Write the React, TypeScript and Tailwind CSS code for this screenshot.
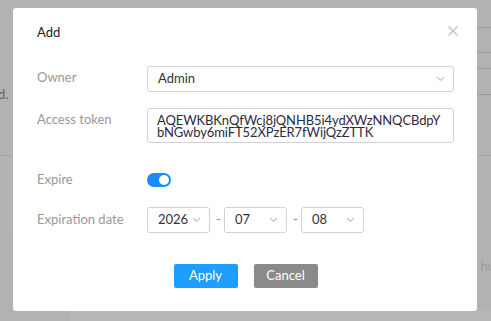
import { useState } from 'react'

function Chevron() {
  return (
    <svg width="9" height="6" viewBox="0 0 9 6" fill="none" className="shrink-0">
      <path d="M1 1l3.5 3.5L8 1" stroke="#c2c2c2" strokeWidth="1.1" />
    </svg>
  )
}

function DateSelect({ value }: { value: string }) {
  return (
    <div className="w-[63px] h-[26px] border border-[#d2d2d2] rounded-[3px] flex items-center justify-between pl-[10px] pr-[8px] text-[13px] text-[#333]">
      <span>{value}</span>
      <Chevron />
    </div>
  )
}

export default function App() {
  const [expire, setExpire] = useState(true)

  return (
    <div
      className="relative w-[491px] h-[321px] overflow-hidden bg-[#b2b2b2] text-[#333]"
      style={{ fontFamily: 'Lato, "Noto Sans", sans-serif' }}
    >
      {/* page behind the overlay */}
      <div className="flex flex-col h-full">
        <div className="h-[28px] border-b border-[#9a9a9a] ml-[477px]" />
        <div className="h-[25px] border-b border-[#9a9a9a] ml-[477px]" />
        <div className="h-[16px] border-b border-[#9a9a9a] ml-[477px]" />
        <div className="h-[26px] border-b border-[#9a9a9a] ml-[477px]" />
        <div className="h-[70px] flex items-start text-[13px] text-[#666] -mt-[10px]">
          <span className="ml-[-2px]">d.</span>
        </div>
        <div className="h-[78px] border-t border-[#a4a4a4] bg-[#b4b4b4]" />
        <div className="flex-1 flex items-start justify-end pt-[24px] text-[13px] text-[#9c9c9c]">
          <span className="mr-[-4px]">hu</span>
        </div>
        <div className="h-[10px] ml-[70px] bg-[#b8b8b8]" />
      </div>

      {/* modal */}
      <div className="absolute left-[13px] top-[8px] w-[464px] h-[303px] bg-white rounded-[3px] flex flex-col">
        <div className="flex items-center justify-between pl-[24px] pr-[19px] h-[46px]">
          <span className="text-[13px] text-[#222] mt-[3px]">Add</span>
          <svg width="10" height="10" viewBox="0 0 10 10" className="mb-[1px]">
            <path d="M0.5 0.5l9 9M9.5 0.5l-9 9" stroke="#bdbdbd" strokeWidth="1.1" />
          </svg>
        </div>

        <div className="flex flex-col pl-[24px] pr-[23px] pt-[12px] text-[13px]">
          <div className="flex items-start">
            <label className="w-[110px] text-[#999] pt-[2px]">Owner</label>
            <div className="flex-1 h-[26px] border border-[#d2d2d2] rounded-[3px] flex items-center justify-between pl-[10px] pr-[8px] text-[#333]">
              <span>Admin</span>
              <Chevron />
            </div>
          </div>

          <div className="flex items-start mt-[16px]">
            <label className="w-[110px] text-[#999] pt-[2px]">Access token</label>
            <div className="flex-1 h-[35px] border border-[#d2d2d2] rounded-[3px] pl-[9px] pr-[8px] pt-[5px] text-[#2b2b3f] leading-[12px] tracking-[-0.1px] break-all">
              AQEWKBKnQfWcj8jQNHB5i4ydXWzNNQCBdpY
              <br />
              bNGwby6miFT52XPzER7fWijQzZTTK
            </div>
          </div>

          <div className="flex items-center mt-[27px]">
            <label className="w-[110px] text-[#999]">Expire</label>
            <button
              onClick={() => setExpire(!expire)}
              className={`w-[24px] h-[14px] rounded-full flex items-center px-[2px] ${
                expire ? 'bg-[#1a8cff] justify-end' : 'bg-[#d2d2d2] justify-start'
              }`}
            >
              <span className="w-[10px] h-[10px] rounded-full bg-white" />
            </button>
          </div>

          <div className="flex items-start mt-[17px]">
            <label className="w-[110px] text-[#999] pt-[3px]">Expiration date</label>
            <div className="flex items-center gap-[6px]">
              <DateSelect value="2026" />
              <span className="text-[#888] w-[2px] text-center">-</span>
              <DateSelect value="07" />
              <span className="text-[#888] w-[2px] text-center">-</span>
              <DateSelect value="08" />
            </div>
          </div>
        </div>

        <div className="flex justify-center gap-[16px] mt-[31px] ml-[1px]">
          <button className="w-[64px] h-[24px] rounded-[2px] bg-[#1e9fff] text-white text-[13px]">Apply</button>
          <button className="w-[64px] h-[24px] rounded-[2px] bg-[#8a8a8a] text-white text-[13px]">Cancel</button>
        </div>
      </div>
    </div>
  )
}
